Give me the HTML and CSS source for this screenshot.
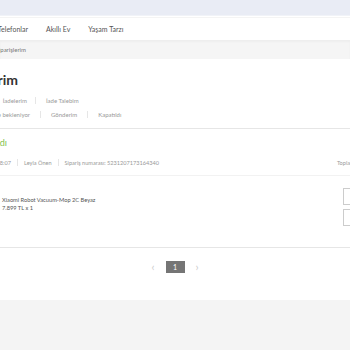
FILE: index.html
```html
<!DOCTYPE html>
<html lang="tr">
<head>
  <meta charset="UTF-8" />
  <meta name="viewport" content="width=device-width, initial-scale=1.0"/>
  <title>Siparişlerim</title>
  <link rel="stylesheet" href="styles.css">
</head>
<body>
  <div class="topbar"></div>
  <nav class="navbar">
    <a class="cut nav-first" href="#">Akıllı Telefonlar</a>
    <a href="#">Akıllı Ev</a>
    <a href="#">Yaşam Tarzı</a>
  </nav>
  <div class="crumbs">
    <span class="cut crumb-last">Ana Sayfa &gt; Siparişlerim</span>
  </div>

  <main class="page">
    <h1 class="cut title">Siparişlerim</h1>
    <div class="tabs">
      <span class="cut tab-first">İadelerim</span>
      <span class="tab">İade Talebim</span>
    </div>
    <div class="tabs">
      <span class="cut tab-second">Ödeme bekleniyor</span>
      <span class="tab">Gönderim</span>
      <span class="tab">Kapatıldı</span>
    </div>

    <section class="order">
      <div class="status"><span class="cut status-text">Kapatıldı</span></div>
      <div class="info">
        <span class="cut info-date">2023-12-07 17:18:07</span>
        <span class="info-item">Leyla Önen</span>
        <span class="info-item">Sipariş numarası: 5231207173164340</span>
        <span class="total">Toplam: 7.899 TL</span>
      </div>
      <div class="product">
        <div class="product-text">
          <p>Xiaomi Robot Vacuum-Mop 2C Beyaz</p>
          <p>7.899 TL x 1</p>
        </div>
        <div class="actions">
          <button>Detaylar</button>
          <button>Fatura</button>
        </div>
      </div>
    </section>

    <div class="pager">
      <span class="arrow">&lsaquo;</span>
      <span class="page-num">1</span>
      <span class="arrow">&rsaquo;</span>
    </div>
  </main>

  <footer class="footer"></footer>
</body>
</html>
```

FILE: styles.css
```css
body{margin:0;font-family:Lato,"Open Sans",sans-serif;background:#fff;overflow:hidden;width:350px;height:350px;color:#555;}
p{margin:0;}
.cut{display:block;text-align:right;white-space:nowrap;flex:none;}

.topbar{height:15px;background:#e9ecf5;border-bottom:1px solid #f1f3f8;}
.navbar{display:flex;align-items:center;gap:18px;height:22px;margin-top:1px;border-top:1px solid #f4f4f4;background:#fff;}
.navbar a{font-size:7px;color:#555;text-decoration:none;white-space:nowrap;}
.nav-first{width:70px;margin-left:-42px;}

.crumbs{height:19px;display:flex;align-items:center;background:#f5f5f5;box-shadow:inset 0 2px 2px rgba(0,0,0,0.03);}
.crumb-last{width:80px;margin-left:-54px;font-size:6px;color:#777;}

.page{padding-top:13px;}
.title{width:200px;margin:0 0 5px -182px;font-size:14px;line-height:16px;font-weight:700;color:#333;}
.tabs{display:flex;align-items:center;height:14px;font-size:6px;color:#999;}
.tab{padding:0 10px;border-left:1px solid #e6e6e6;line-height:7px;white-space:nowrap;}
.tab-first{width:60px;margin-left:-33px;padding-right:8px;}
.tab-second{width:80px;margin-left:-50px;padding-right:10px;}

.order{margin-top:7px;border-top:1px solid #e6e6e6;}
.status{height:26px;display:flex;align-items:center;}
.status-text{width:60px;margin-left:-53px;font-size:9px;color:#83c44e;}
.info{display:flex;align-items:center;height:14px;margin-bottom:6px;font-size:5.6px;color:#999;}
.info-date{width:60px;margin-left:-49px;padding-right:6px;}
.info-item{padding:0 6px;border-left:1px solid #e6e6e6;line-height:7px;white-space:nowrap;}
.total{margin-left:auto;width:60px;margin-right:-47px;white-space:nowrap;}

.product{display:flex;height:71px;border-top:1px solid #f2f2f2;border-bottom:1px solid #e6e6e6;}
.product-text{margin:20px 0 0 2px;font-size:5.7px;line-height:8px;color:#555;}
.actions{margin:12px -30px 0 auto;display:flex;flex-direction:column;gap:4px;width:37px;}
.actions button{height:17px;padding:0;background:#fff;border:1px solid #ccc;font-size:6px;color:#666;font-family:inherit;}

.pager{display:flex;justify-content:center;align-items:flex-start;gap:9px;height:52px;padding-top:13px;box-sizing:border-box;}
.arrow{font-size:11px;line-height:12px;color:#ccc;width:7px;text-align:center;}
.page-num{width:19px;height:12px;background:#757575;color:#fff;font-size:7px;line-height:12px;text-align:center;}

.footer{height:60px;background:#f4f4f4;}
```
